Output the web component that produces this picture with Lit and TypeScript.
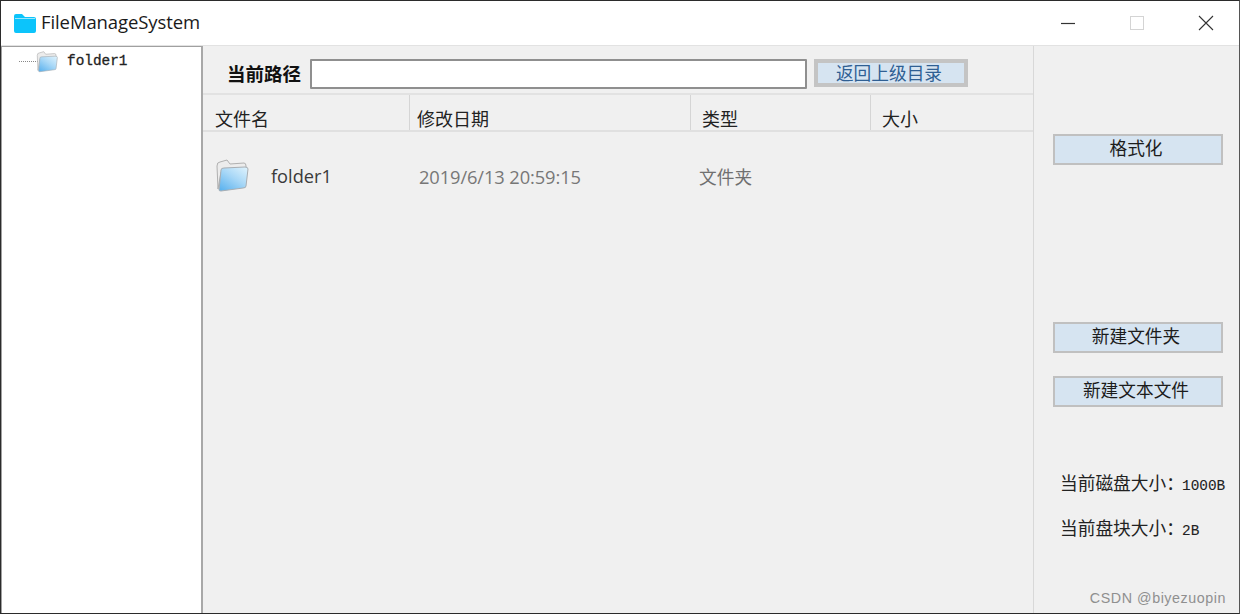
import { LitElement, html, css, svg } from "lit";
import { customElement } from "lit/decorators.js";

const folder = (w: number, h: number) => html`<svg width=${w} height=${h} viewBox="0 0 34 34">
  <defs><linearGradient id="fg" x1="0.1" y1="1" x2="0.9" y2="0">
    <stop offset="0" stop-color="#5bb2ee"/><stop offset="0.55" stop-color="#a9d8f7"/><stop offset="1" stop-color="#dcf1fc"/>
  </linearGradient></defs>
  ${svg`<path d="M3 30 L2 7 Q2 3 5 3 L12 1 L15 5 L29 4 Q31 4 31 7 L31 12 L6 13 Z" fill="#ececec" stroke="#b0b0b0" stroke-width="1"/>
  <path d="M4 31 L6 11 Q6 9 9 9 L30 8 Q33 8 33 10 L31 27 Q31 29 28 29 L6 32 Q4 32 4 31 Z" fill="url(#fg)" stroke="#a8aeb3" stroke-width="1"/>`}
</svg>`;

@customElement("app-root")
export class AppRoot extends LitElement {
  static styles = css`
    :host { display: block; width: 1240px; height: 614px; overflow: hidden; box-sizing: border-box;
      border: 1px solid #2b2b2b; border-right-color: #555; background: #f0f0f0; color: #111;
      font-family: "Noto Sans CJK SC", "Noto Sans", sans-serif; }
    .title { height: 45px; background: #fff; display: flex; align-items: center; padding-left: 13px; border-bottom: 1px solid #e2e2e2; box-sizing: border-box; }
    .logo { display: block; margin-right: 5px; }
    .name { font-family: "Open Sans", "Noto Sans", sans-serif; font-size: 18.5px; color: #1a1a1a; flex: 1; letter-spacing: -0.1px; padding-bottom: 4px; }
    .win { display: flex; align-items: center; margin-right: -1px; }
    .win span { width: 69px; height: 44px; display: flex; align-items: center; justify-content: center; }
    .body { display: flex; height: 567px; }
    .tree { width: 199px; background: #fff; border: 1px solid #a0a0a0; border-width: 1px 2px 0 1px; border-right-color: #a8a8a8; display: flex; align-items: flex-start; padding-top: 4px; height: 563px; }
    .dots { width: 19px; margin: 10px 0 0 17px; border-top: 1px dotted #888; }
    .tree-label { font: 14.4px/20px "Liberation Mono", monospace; margin-left: 9px; color: #222; -webkit-text-stroke: 0.3px #222; }
    .tree svg { margin-left: -2px; }
    .main { width: 830px; border-right: 1px solid #d8d8d8; flex: none; }
    .toolbar { height: 49px; display: flex; align-items: center; padding: 9px 0 0 24px; box-sizing: border-box; border-bottom: 2px solid #e2e2e2; }
    .path-label { font-size: 18.5px; font-weight: 700; width: 83px; white-space: nowrap; margin-bottom: 3px; }
    .path { width: 497px; height: 30px; box-sizing: border-box; background: #fff; border: 2px solid #8f8f8f; border-radius: 1px; }
    .back { width: 154px; height: 28px; margin: 0 0 2px 7px; padding-right: 4px; box-sizing: border-box; background: #d6e4f1; border: 4px solid #c4c4c4; color: #2f5f93; font-size: 17.7px; line-height: 18px; text-align: center; }
    .head { display: grid; grid-template-columns: 206px 281px 180px 1fr; height: 37px; border-bottom: 2px solid #e0e0e0; box-sizing: border-box; font-size: 18px; color: #222; }
    .head div { padding: 10px 0 0 11px; line-height: 26px; border-left: 1px solid #d5d5d5; box-sizing: border-box; white-space: nowrap; overflow: hidden; }
    .head div:first-child { border-left: 0; padding-left: 12px; }
    .head div:nth-child(2) { padding-left: 7px; }
    .row { display: grid; grid-template-columns: 56px 148px 280px 1fr; align-items: center; height: 36px; margin-top: 26px; padding-left: 12px; }
    .row svg { display: block; }
    .fname { font: 18.2px "Open Sans", sans-serif; color: #3a3a3a; white-space: nowrap; }
    .date { font: 18.3px "Open Sans", sans-serif; color: #777; letter-spacing: -0.1px; white-space: nowrap; }
    .kind { font-size: 17.7px; color: #707070; }
    .side { flex: 1; padding: 88px 0 0 19px; }
    .btn { width: 170px; height: 31px; padding-right: 4px; box-sizing: border-box; background: #d6e4f1; border: 2px solid #c0c0c0; font-size: 17.7px; line-height: 22px; text-align: center; color: #1c1c1c; }
    .b2 { margin-top: 157px; }
    .b3 { margin-top: 23px; }
    .info { margin: 63px 0 0 7px; font-size: 17.7px; line-height: 24px; color: #222; white-space: nowrap; display: flex; align-items: baseline; }
    .info + .info { margin-top: 21px; }
    .info span { width: 122px; flex: none; }
    .info b { font: 14.4px "Liberation Mono", monospace; -webkit-text-stroke: 0.1px #222; }
    .mark { position: absolute; right: 14px; bottom: 8px; font: 14.3px "Liberation Sans", sans-serif; color: #8f8f8f; letter-spacing: 0.55px; }
  `;

  render() {
    return html`
      <div class="title">
        <svg class="logo" width="22" height="20" viewBox="0 0 22 20">
          <path d="M0 3 Q0 1 2 1 H8 L11 4 H20 Q22 4 22 6 V18 Q22 20 20 20 H2 Q0 20 0 18 Z" fill="#0cc4fb"/>
          <path d="M1 5.5 H21" stroke="#bff0ff" stroke-width="0.8"/>
        </svg>
        <span class="name">FileManageSystem</span>
        <div class="win">
          <span><svg width="16" height="16"><path d="M1 8.5H15" stroke="#333" stroke-width="1.2"/></svg></span>
          <span><svg width="16" height="16"><rect x="1.5" y="1.5" width="13" height="13" fill="none" stroke="#d4d4d4"/></svg></span>
          <span><svg width="16" height="16"><path d="M1 1L15 15M15 1L1 15" stroke="#333" stroke-width="1.1"/></svg></span>
        </div>
      </div>
      <div class="body">
        <div class="tree">
          <div class="dots"></div>
          ${folder(22, 22)}
          <span class="tree-label">folder1</span>
        </div>
        <div class="main">
          <div class="toolbar">
            <div class="path-label">当前路径</div>
            <div class="path"></div>
            <div class="back">返回上级目录</div>
          </div>
          <div class="head">
            <div>文件名</div><div>修改日期</div><div>类型</div><div>大小</div>
          </div>
          <div class="row">
            ${folder(34, 34)}
            <span class="fname">folder1</span>
            <span class="date">2019/6/13 20:59:15</span>
            <span class="kind">文件夹</span>
          </div>
        </div>
        <div class="side">
          <div class="btn">格式化</div>
          <div class="btn b2">新建文件夹</div>
          <div class="btn b3">新建文本文件</div>
          <div class="info"><span>当前磁盘大小：</span><b>1000B</b></div>
          <div class="info"><span>当前盘块大小：</span><b>2B</b></div>
        </div>
      </div>
      <div class="mark">CSDN @biyezuopin</div>
    `;
  }
}
